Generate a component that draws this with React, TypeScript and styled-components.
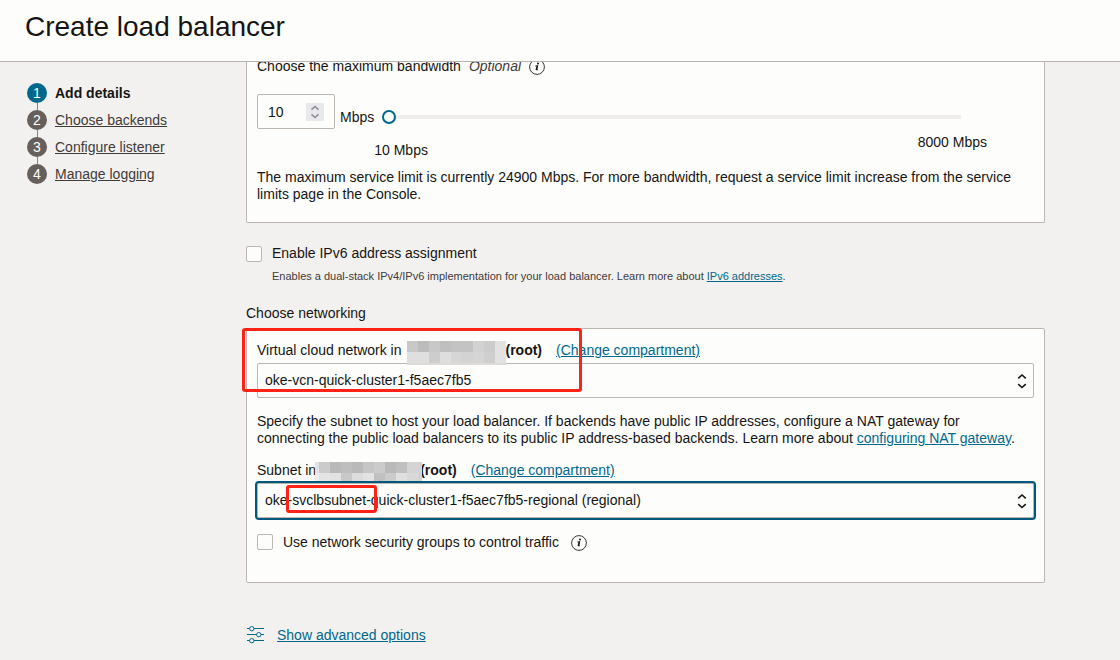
import React from 'react';
import styled, { createGlobalStyle, css } from 'styled-components';

const GlobalStyle = createGlobalStyle`
  *, *::before, *::after { box-sizing: border-box; }
  body {
    margin: 0;
    background: #f3f1f0;
    color: #161513;
    font: 14px/17px "Liberation Sans", Arial, sans-serif;
  }
  button, input, select { font: inherit; color: inherit; }
`;

const Page = styled.div`
  height: 100vh;
  display: flex;
  flex-direction: column;
`;

const Header = styled.header`
  flex: none;
  padding: 11px 25px 18px;
  background: #fdfdfc;
  border-bottom: 1px solid #b8b4af;
`;

const Title = styled.h1`
  margin: 0;
  font-size: 28px;
  line-height: 32px;
  font-weight: 400;
`;

const Body = styled.div`
  flex: 1;
  min-height: 0;
  display: flex;
  overflow: hidden;
`;

const Steps = styled.ol`
  flex: none;
  width: 246px;
  margin: 0;
  padding: 21px 0 0 27px;
  list-style: none;
  display: flex;
  flex-direction: column;
  gap: 7px;
`;

const Step = styled.li`
  position: relative;
  display: flex;
  align-items: center;
  gap: 8px;
  height: 20px;

  & + &::before {
    content: "";
    position: absolute;
    left: 10px;
    top: -7px;
    width: 1px;
    height: 7px;
    background: #8b8580;
  }
`;

const StepNumber = styled.span<{ $active?: boolean }>`
  width: 20px;
  height: 20px;
  border-radius: 50%;
  background: ${p => (p.$active ? '#00688c' : '#665f5b')};
  color: #fff;
  line-height: 20px;
  text-align: center;
`;

const StepLink = styled.a<{ $active?: boolean }>`
  color: ${p => (p.$active ? '#161513' : '#3f3b38')};
  font-weight: ${p => (p.$active ? 700 : 400)};
  text-decoration: ${p => (p.$active ? 'none' : 'underline')};
`;

const Form = styled.main`
  flex: 1;
  min-width: 0;
  margin: -4px 75px 0 0;
`;

const Panel = styled.section<{ $continued?: boolean }>`
  background: #fdfdfc;
  border: 1px solid #bbb6b0;
  border-radius: 2px;
  padding: 13px 10px 31px;
  ${p => p.$continued && css`
    border-top: 0;
    padding: 0 10px 19px;
  `}
`;

const LabelRow = styled.div`
  display: flex;
  align-items: center;
`;

const Optional = styled.em`
  margin: 0 8px;
  color: #3f3b38;
`;

const Bandwidth = styled.div`
  display: flex;
  align-items: flex-start;
  margin-top: 19px;
`;

const NumberBox = styled.span`
  flex: none;
  display: flex;
  align-items: center;
  width: 78px;
  height: 35px;
  padding: 0 10px;
  background: #fdfdfc;
  border: 1px solid #bbb6b0;
  border-radius: 2px;
`;

const NumberInput = styled.input`
  flex: 1;
  min-width: 0;
  padding: 2px 0 0;
  border: 0;
  outline: 0;
  background: transparent;
  appearance: textfield;
  &::-webkit-inner-spin-button { appearance: none; margin: 0; }
`;

const Spinner = styled.svg`
  flex: none;
  width: 18px;
  height: 18px;
  background: #e9e9ed;
  fill: none;
  stroke: #8f8f9d;
  stroke-width: 1.6;
`;

const Unit = styled.span`
  margin: 15px 0 0 5px;
`;

const SliderGroup = styled.div`
  flex: 1;
  min-width: 0;
  margin: 16px 47px 0 0;
`;

const Range = styled.input`
  display: block;
  width: calc(100% - 34px);
  height: 14px;
  margin: 0 0 0 8px;
  appearance: none;
  background: linear-gradient(#f0eeed, #f0eeed) center / 100% 4px no-repeat;
  &::-webkit-slider-thumb {
    appearance: none;
    width: 14px;
    height: 14px;
    border: 2px solid #00688c;
    border-radius: 50%;
    background: #fdfdfc;
  }
`;

const Scale = styled.div`
  display: flex;
  justify-content: space-between;
  align-items: flex-start;
  margin-top: 10px;
`;

const ScaleStart = styled.span`
  padding-top: 8px;
`;

const Note = styled.p<{ $top: number }>`
  margin: ${p => p.$top}px 0 0;
  padding-right: 10px;
`;

const CheckRow = styled.div<{ $top: number }>`
  display: flex;
  align-items: center;
  margin-top: ${p => p.$top}px;
`;

const Check = styled.input`
  flex: none;
  appearance: none;
  width: 16px;
  height: 16px;
  margin: 0 10px 0 0;
  background: #fdfdfc;
  border: 1px solid #bbb6b0;
  border-radius: 2px;
`;

const Hint = styled.p`
  margin: 7px 0 0 26px;
  color: #3f3b38;
  font-size: 11px;
  line-height: 15px;
`;

const Link = styled.a`
  color: #00688c;
  text-decoration: underline;
`;

const Heading = styled.h2`
  margin: 21px 0 6px;
  font-size: 14px;
  line-height: 17px;
  font-weight: 400;
`;

const Field = styled.div<{ $top?: number }>`
  position: relative;
  margin-top: ${p => p.$top ?? 0}px;
`;

const FieldLabel = styled(LabelRow)`
  height: 17px;
  margin-bottom: 4px;
  a { margin-left: 14px; }
`;

const Mosaic = styled.svg<{ $overlap?: boolean }>`
  flex: none;
  position: relative;
  z-index: 1;
  align-self: flex-start;
  margin: -1px -1px 0 6px;
  ${p => p.$overlap && css`margin: 0 -2px 0 -1px;`}
`;

const SelectBox = styled.div<{ $focused?: boolean }>`
  position: relative;
  border-radius: 2px;
  outline: ${p => (p.$focused ? '2px solid #00587c' : 'none')};
`;

const Select = styled.select`
  display: block;
  appearance: none;
  width: 100%;
  height: 35px;
  padding: 0 30px 0 7px;
  background: #fdfdfc;
  border: 1px solid #bbb6b0;
  border-radius: 2px;
  outline: 0;
`;

const Chevrons = styled.svg`
  position: absolute;
  right: 7px;
  top: 10px;
  width: 10px;
  height: 16px;
  fill: none;
  stroke: #161513;
  stroke-width: 1.6;
  pointer-events: none;
`;

const Highlight = styled.div<{ $x: number; $y: number; $w: number; $h: number }>`
  position: absolute;
  z-index: 2;
  left: ${p => p.$x}px;
  top: ${p => p.$y}px;
  width: ${p => p.$w}px;
  height: ${p => p.$h}px;
  border: 3px solid #ff2216;
  border-radius: 3px;
  pointer-events: none;
`;

const InfoButton = styled.button`
  flex: none;
  display: flex;
  padding: 0;
  border: 0;
  background: none;
`;

const TrailingInfo = styled.span`
  margin: 2px 0 0 12px;
`;

const Advanced = styled.div`
  display: flex;
  align-items: center;
  gap: 13px;
  margin-top: 43px;
`;

function Info() {
  return (
    <InfoButton type="button" aria-label="More information">
      <svg width="16" height="16" viewBox="0 0 16 16">
        <circle cx="8" cy="8" r="7.4" fill="none" stroke="#3a3734" strokeWidth="1" />
        <circle cx="9" cy="4.6" r="1" fill="#161513" />
        <path d="M6.300 7.100Q7.500 6.700 8.800 6.500L7.700 10.600Q7.600 11.200 8.200 10.900L9 10.300" fill="none" stroke="#161513" strokeWidth="0.900" />
        <path d="M8.300 6.900L7.200 11" fill="none" stroke="#161513" strokeWidth="1.400" />
      </svg>
    </InfoButton>
  );
}

function UpDown() {
  return (
    <Chevrons viewBox="0 0 10 16" aria-hidden="true">
      <path d="M1.200 5.300L5 2L8.800 5.300M1.200 11.200L5 14.500L8.800 11.200" />
    </Chevrons>
  );
}

type Tile = { x: number; y: number; w: number; h: number; c: string };

function tiles(rows: { h: number; cells: string[] }[], first: number, total: number): Tile[] {
  const out: Tile[] = [];
  let y = 0;
  rows.forEach(row => {
    let x = 0;
    row.cells.forEach((c, i) => {
      const w = i === 0 ? first : Math.min(11, total - x);
      out.push({ x, y, w, h: row.h, c });
      x += w;
    });
    y += row.h;
  });
  return out;
}

const vcnTiles = tiles([
  { h: 11, cells: ['#c8c8c8', '#bcbcbc', '#c9c8c8', '#c0bfbf', '#c4c3c3', '#c3c3c3', '#d2d2d2', '#cccccc', '#e2e2e2'] },
  { h: 11, cells: ['#dfdfdf', '#dfdfdf', '#cdcdcd', '#dedede', '#d6d6d6', '#d3d3d3', '#d5d5d5', '#cfcfcf', '#e2e2e2'] },
  { h: 2, cells: Array(9).fill('#dfdada') },
], 11, 99);

const subnetTiles = tiles([
  { h: 11, cells: ['#e2e2e2', '#cbcbcb', '#b9b9b9', '#bebebe', '#b9b9b9', '#c5c5c5', '#cbcbcb', '#b9b9b9', '#c0c0c0', '#d4d4d4', '#d4d4d4'] },
  { h: 8, cells: ['#ececec', '#e4e4e4', '#e2e2e2', '#c8c8c8', '#dcdcdc', '#e2e2e2', '#c0c0c0', '#cbcbcb', '#e0e0e0', '#d8d8d8', '#d4d4d4'] },
], 4, 107);

function Redacted({ width, height, cells, overlap }: { width: number; height: number; cells: Tile[]; overlap?: boolean }) {
  return (
    <Mosaic width={width} height={height} $overlap={overlap} shapeRendering="crispEdges" overflow="visible" aria-hidden="true">
      {cells.map((t, i) => <rect key={i} x={t.x} y={t.y} width={t.w} height={t.h} fill={t.c} />)}
    </Mosaic>
  );
}

const steps = ['Add details', 'Choose backends', 'Configure listener', 'Manage logging'];

export default function App() {
  return (
    <Page>
      <GlobalStyle />
      <Header><Title>Create load balancer</Title></Header>
      <Body>
        <Steps>
          {steps.map((name, i) => (
            <Step key={name}>
              <StepNumber $active={i === 0}>{i + 1}</StepNumber>
              <StepLink href="#" $active={i === 0}>{name}</StepLink>
            </Step>
          ))}
        </Steps>
        <Form>
          <Panel $continued>
            <LabelRow>
              <label htmlFor="bandwidth">Choose the maximum bandwidth</label>
              <Optional>Optional</Optional>
              <Info />
            </LabelRow>
            <Bandwidth>
              <NumberBox>
                <NumberInput id="bandwidth" type="number" defaultValue={10} />
                <Spinner viewBox="0 0 18 18" aria-hidden="true">
                  <path d="M5.500 6.700L9 3.500L12.500 6.700M5.500 11.300L9 14.500L12.500 11.300" />
                </Spinner>
              </NumberBox>
              <Unit>Mbps</Unit>
              <SliderGroup>
                <Range type="range" aria-label="Maximum bandwidth" min={10} max={8000} defaultValue={10} />
                <Scale>
                  <ScaleStart>10 Mbps</ScaleStart>
                  <span>8000 Mbps</span>
                </Scale>
              </SliderGroup>
            </Bandwidth>
            <Note $top={10}>
              The maximum service limit is currently 24900 Mbps. For more bandwidth, request a service limit increase from the service limits page in the Console.
            </Note>
          </Panel>

          <CheckRow $top={22}>
            <Check id="ipv6" type="checkbox" />
            <label htmlFor="ipv6">Enable IPv6 address assignment</label>
          </CheckRow>
          <Hint>
            Enables a dual-stack IPv4/IPv6 implementation for your load balancer. Learn more about <Link href="#">IPv6 addresses</Link>.
          </Hint>

          <Heading>Choose networking</Heading>
          <Panel>
            <Field>
              <FieldLabel>
                <label htmlFor="vcn">Virtual cloud network in</label>
                <Redacted width={99} height={24} cells={vcnTiles} />
                <strong>(root)</strong>
                <Link href="#">(Change compartment)</Link>
              </FieldLabel>
              <SelectBox>
                <Select id="vcn"><option>oke-vcn-quick-cluster1-f5aec7fb5</option></Select>
                <UpDown />
              </SelectBox>
              <Highlight $x={-15} $y={-14} $w={340} $h={64} />
            </Field>
            <Note $top={15}>
              Specify the subnet to host your load balancer. If backends have public IP addresses, configure a NAT gateway for connecting the public load balancers to its public IP address-based backends. Learn more about <Link href="#">configuring NAT gateway</Link>.
            </Note>
            <Field $top={15}>
              <FieldLabel>
                <label htmlFor="subnet">Subnet in</label>
                <Redacted width={107} height={19} cells={subnetTiles} overlap />
                <strong>(root)</strong>
                <Link href="#">(Change compartment)</Link>
              </FieldLabel>
              <SelectBox $focused>
                <Select id="subnet"><option>oke-svclbsubnet-quick-cluster1-f5aec7fb5-regional (regional)</option></Select>
                <UpDown />
                <Highlight $x={29} $y={2} $w={91} $h={28} />
              </SelectBox>
            </Field>
            <CheckRow $top={15}>
              <Check id="nsg" type="checkbox" />
              <label htmlFor="nsg">Use network security groups to control traffic</label>
              <TrailingInfo><Info /></TrailingInfo>
            </CheckRow>
          </Panel>

          <Advanced>
            <svg width="18" height="18" viewBox="0 0 18 18" fill="none" stroke="#00688c" strokeWidth="1" aria-hidden="true">
              <path d="M1 2.500H3.500M8 2.500H18M1 8.500H10.500M15 8.500H18M1 14.500H3.500M8 14.500H18" />
              <circle cx="5.800" cy="2.700" r="2.200" /><circle cx="12.800" cy="8.700" r="2.200" /><circle cx="5.800" cy="14.700" r="2.200" />
            </svg>
            <Link href="#">Show advanced options</Link>
          </Advanced>
        </Form>
      </Body>
    </Page>
  );
}
